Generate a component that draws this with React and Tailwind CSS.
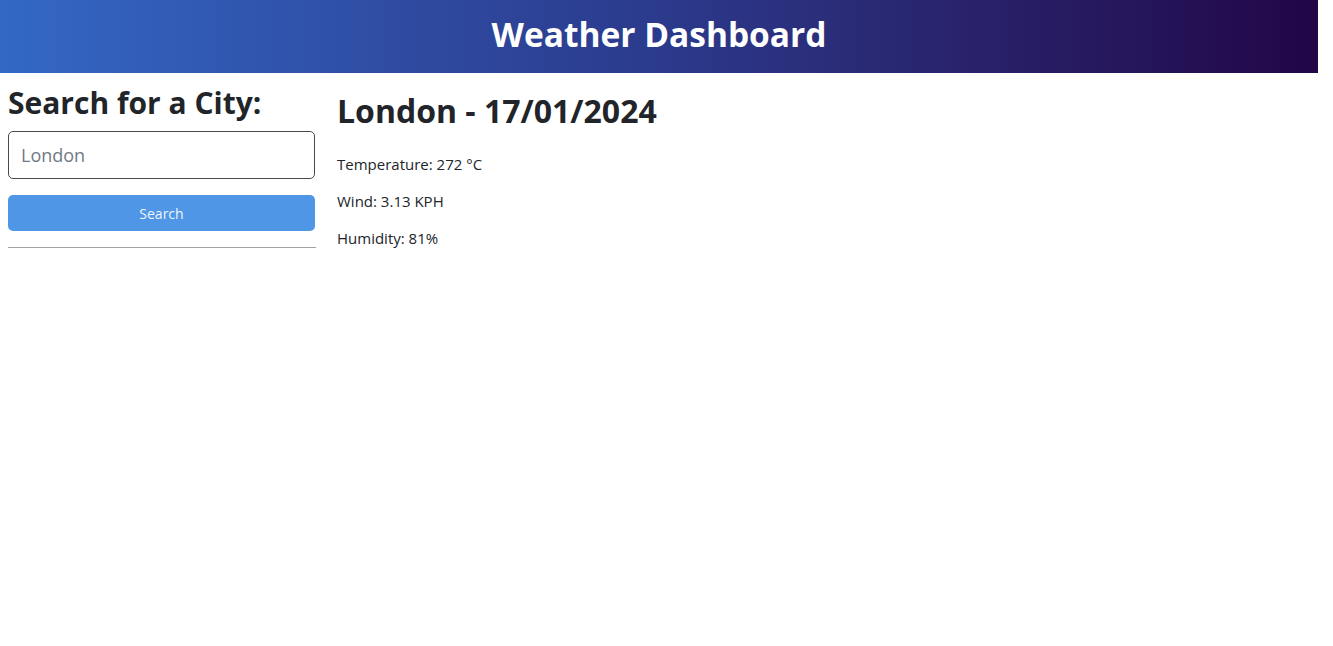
import React, { useState } from 'react';

const font = { fontFamily: '"Open Sans", "Noto Sans", Arial, sans-serif' };

const WeatherDetails = ({ city, date, temp, wind, humidity }) => (
  <section className="flex-1 pl-[21px] pt-[14px]">
    <h2 className="text-[32px] font-bold leading-[48px] text-[#212529]">
      {city} - {date}
    </h2>
    <div className="mt-[19px] flex flex-col gap-[16px] text-[15px] leading-[21px] text-[#212529]">
      <p>Temperature: {temp} °C</p>
      <p>Wind: {wind} KPH</p>
      <p>Humidity: {humidity}%</p>
    </div>
  </section>
);

export default function App() {
  const [query, setQuery] = useState('');

  return (
    <div className="w-[1318px] min-h-[646px] bg-white" style={font}>
      <header className="flex h-[73px] items-center justify-center bg-linear-to-r from-[#3368c5] via-[#2b3a8c] to-[#210648]">
        <h1 className="-mt-[3px] text-[33.5px] font-bold leading-none text-white">Weather Dashboard</h1>
      </header>

      <main className="flex px-2">
        <aside className="w-[308px] pt-[13px]">
          <h3 className="text-[30px] font-bold leading-[34px] text-[#212529]">Search for a City:</h3>
          <input
            value={query}
            onChange={(e) => setQuery(e.target.value)}
            placeholder="London"
            className="mt-[11px] block h-[48px] w-[307px] rounded-[5px] border border-[#4a4a4a] px-[12px] text-[18px] text-[#212529] placeholder:text-[#707a84] outline-none"
          />
          <button className="mt-[16px] block h-[36px] w-[307px] rounded-[5px] bg-[#4f97e6] text-[14px] text-[#eef4fc]">
            Search
          </button>
          <hr className="mt-[16px] border-t border-[#a3a3a3]" />
        </aside>

        <WeatherDetails city="London" date="17/01/2024" temp="272" wind="3.13" humidity="81" />
      </main>
    </div>
  );
}
